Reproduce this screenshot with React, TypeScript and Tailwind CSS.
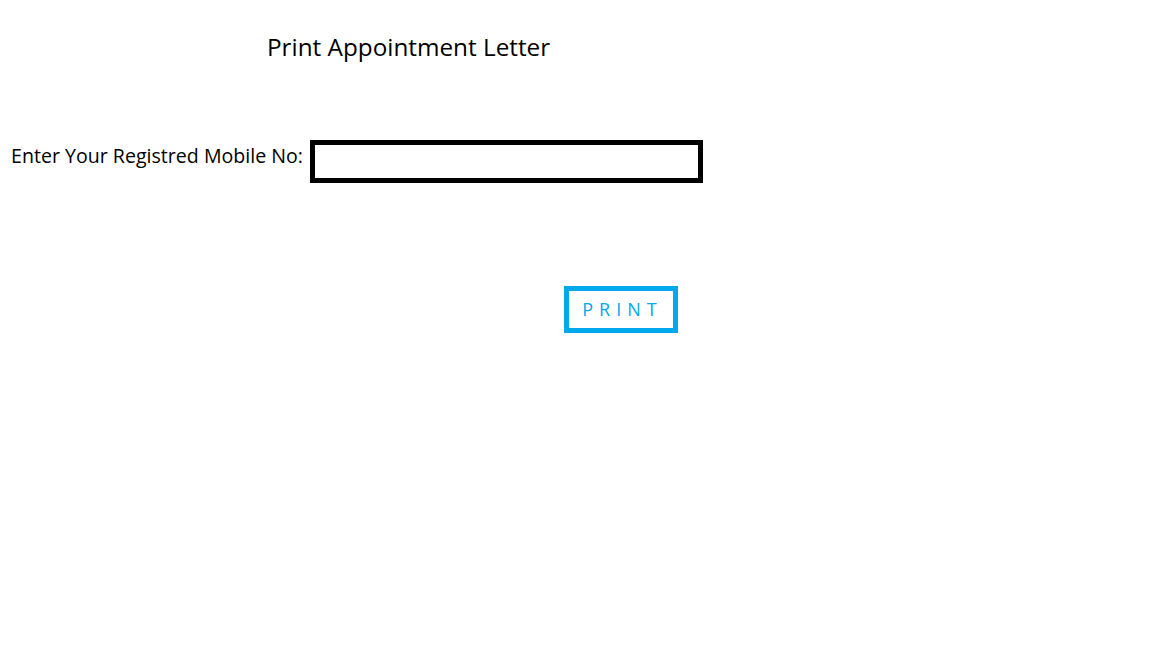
import React from "react";

const App: React.FC = () => {
  return (
    <div className="min-h-[648px] w-[1152px] bg-white text-black font-['Open_Sans',sans-serif]">
      <div className="pl-[267px] pt-[30px]">
        <h1 className="text-[24.3px] leading-[34px] font-normal">Print Appointment Letter</h1>
      </div>
      <div className="mt-[76px] flex items-start">
        <label className="w-[310px] shrink-0 pl-[11px] pt-[2px] text-[19.6px] leading-[28px] whitespace-nowrap">
          Enter Your Registred Mobile No:
        </label>
        <input
          type="text"
          className="h-[43px] w-[393px] border-[5px] border-black bg-white outline-none"
        />
      </div>
      <div className="mt-[103px] pl-[564px]">
        <button className="h-[47px] w-[114px] border-[5px] border-[#00a8ec] pl-[3px] text-[18px] tracking-[6px] text-[#00a8ec]">
          PRINT
        </button>
      </div>
    </div>
  );
};

export default App;
